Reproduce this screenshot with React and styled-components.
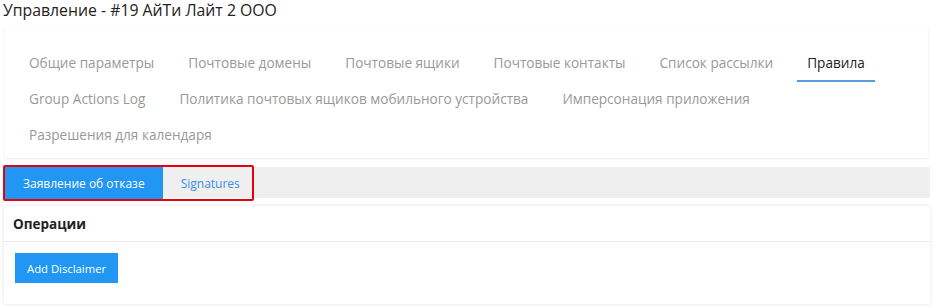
import React from 'react'
import styled, { createGlobalStyle } from 'styled-components'

const GlobalStyle = createGlobalStyle`
  * { box-sizing: border-box; }
  body {
    margin: 0;
    background: #ffffff;
    font-family: "Open Sans", "Noto Sans", sans-serif;
    color: #333333;
  }
`

const mainTabs = [
  'Общие параметры',
  'Почтовые домены',
  'Почтовые ящики',
  'Почтовые контакты',
  'Список рассылки',
  'Правила',
  'Group Actions Log',
  'Политика почтовых ящиков мобильного устройства',
  'Имперсонация приложения',
  'Разрешения для календаря',
]

const App = () => {
  return (
    <>
      <GlobalStyle />
      <Page>
        <Title>Управление - #19 АйТи Лайт 2 ООО</Title>
        <TabsCard>
          <TabList>
            {mainTabs.map(t => (
              <Tab key={t} active={t === 'Правила'}>{t}</Tab>
            ))}
          </TabList>
        </TabsCard>
        <SubBar>
          <Highlight>
            <SubTab active>Заявление об отказе</SubTab>
            <SubTab>Signatures</SubTab>
          </Highlight>
        </SubBar>
        <Panel>
          <PanelHeader>Операции</PanelHeader>
          <PanelBody>
            <Button>Add Disclaimer</Button>
          </PanelBody>
        </Panel>
      </Page>
    </>
  )
}

const Page = styled.div`
  width: 934px;
  height: 306px;
  overflow: hidden;
`

const Title = styled.h1`
  margin: 0;
  padding: 0 3px;
  height: 24px;
  line-height: 20px;
  font-size: 15.8px;
  font-weight: 400;
  color: #222;
`

const TabsCard = styled.div`
  margin: 2px 6px 0 5px;
  padding: 20px 14px 4px;
  background: #fff;
  box-shadow: 0 1px 3px rgba(0, 0, 0, 0.08);
`

const TabList = styled.div`
  display: flex;
  flex-wrap: wrap;
  column-gap: 14px;
`

const Tab = styled.div`
  padding: 0 10px;
  height: 36px;
  line-height: 34px;
  font-size: 13.6px;
  color: ${p => (p.active ? '#222' : '#999')};
  border-bottom: 2px solid ${p => (p.active ? '#5a9be0' : 'transparent')};
  white-space: nowrap;
`

const SubBar = styled.div`
  margin: 9px 4px 0 5px;
  height: 31px;
  background: #efefef;
  border-radius: 2px;
  display: flex;
  align-items: stretch;
`

const Highlight = styled.div`
  display: flex;
  margin: -2px 0 -3px -2px;
  border: 2px solid #e3000f;
  border-radius: 2px;
`

const SubTab = styled.div`
  padding: ${p => (p.active ? '0 18px' : '0 12px 0 18px')};
  display: flex;
  align-items: center;
  font-size: 12px;
  background: ${p => (p.active ? '#2196f3' : 'transparent')};
  color: ${p => (p.active ? '#fff' : '#3a8ee6')};
`

const Panel = styled.div`
  margin: 8px 4px 0 4px;
  height: 98px;
  background: #fff;
  box-shadow: 0 0 4px rgba(0, 0, 0, 0.12);
  border-radius: 2px;
`

const PanelHeader = styled.div`
  height: 36px;
  padding: 0 9px;
  display: flex;
  align-items: center;
  font-size: 13.5px;
  font-weight: 700;
  color: #222;
  border-bottom: 1px solid #ececec;
`

const PanelBody = styled.div`
  padding: 11px 11px;
`

const Button = styled.button`
  height: 30px;
  padding: 0 12px;
  border: none;
  background: #2196f3;
  color: #fff;
  font-family: "Open Sans", sans-serif;
  font-size: 11.3px;
  cursor: pointer;
`

export default App
